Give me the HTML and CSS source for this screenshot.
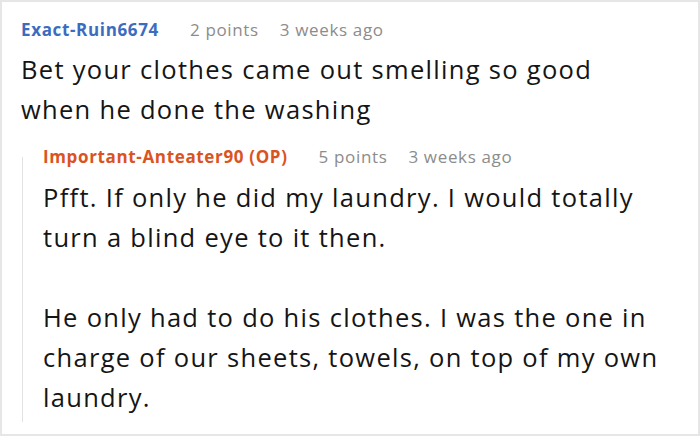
FILE: index.html
```html
<!DOCTYPE html>
<html>
<head>
<meta charset="utf-8">
<link rel="stylesheet" href="styles.css">
</head>
<body>
<div class="thread">
  <div class="comment">
    <div class="meta">
      <span class="author">Exact-Ruin6674</span>
      <span class="info">2 points</span>
      <span class="info">3 weeks ago</span>
    </div>
    <div class="text">
      <p>Bet your clothes came out smelling so good when he done the washing</p>
    </div>
  </div>
  <div class="reply">
    <div class="meta">
      <span class="author op">Important-Anteater90 (OP)</span>
      <span class="info">5 points</span>
      <span class="info">3 weeks ago</span>
    </div>
    <div class="text">
      <p>Pfft. If only he did my laundry. I would totally turn a blind eye to it then.</p>
      <p>He only had to do his clothes. I was the one in charge of our sheets, towels, on top of my own laundry.</p>
    </div>
  </div>
</div>
</body>
</html>
```

FILE: styles.css
```css
html, body {
  margin: 0;
  padding: 0;
  background: #ffffff;
}

.thread {
  box-sizing: border-box;
  width: 700px;
  height: 436px;
  border: 2px solid #e6e6e6;
  padding: 17px 37px 0 19px;
  font-family: "Open Sans", "Noto Sans", sans-serif;
  color: #151515;
  overflow: hidden;
}

.meta {
  display: flex;
  align-items: baseline;
  gap: 21px;
  font-size: 17px;
  line-height: 22px;
  letter-spacing: 0.65px;
  margin-bottom: 8px;
}

.author {
  font-weight: 700;
  color: #3b6cc0;
  margin-right: 10px;
}

.author.op {
  color: #d9541f;
}

.info {
  color: #8c8c8c;
}

.text {
  font-size: 25.5px;
  line-height: 40px;
  letter-spacing: 1.3px;
}

.text p {
  margin: 0 0 40px 0;
}

.text p:last-child {
  margin-bottom: 0;
}

.reply {
  display: flex;
  flex-direction: column;
  margin: 28px 0 0 1px;
  border-left: 1px solid #e2e2e2;
  padding: 0 0 5px 20px;
}

.reply .meta {
  margin-top: -11px;
  margin-bottom: 9px;
}
```
